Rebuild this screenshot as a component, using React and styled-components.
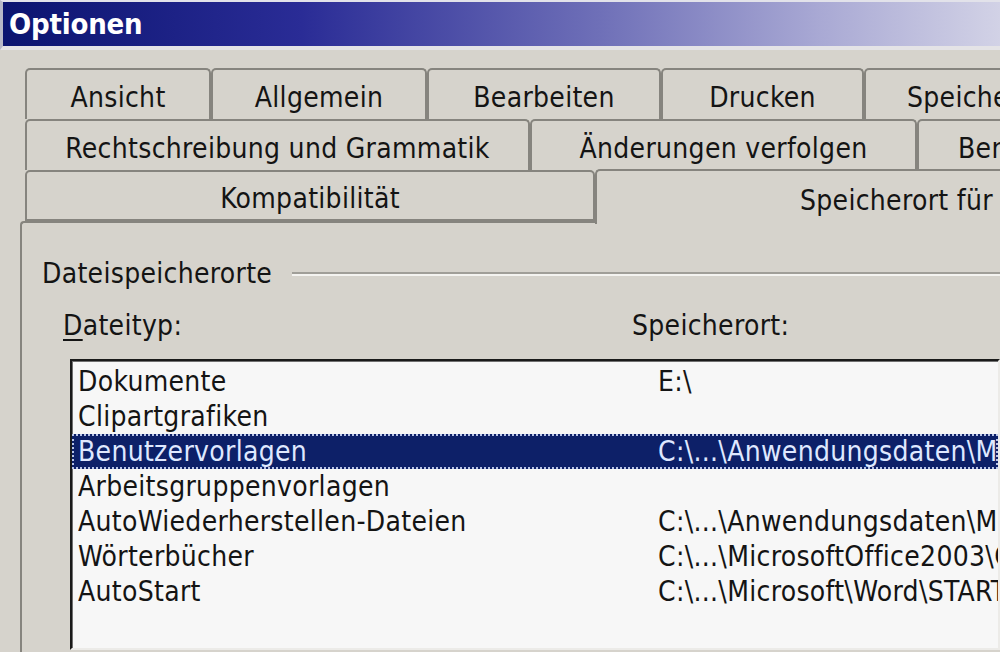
import React from 'react';
import styled, { createGlobalStyle } from 'styled-components';

const GlobalStyle = createGlobalStyle`
  html, body {
    margin: 0;
    padding: 0;
    background: #d6d3cc;
  }
  body {
    font-family: "DejaVu Sans Condensed", "Liberation Sans", sans-serif;
    color: #141414;
  }
`;

const Window = styled.div`
  width: 1000px;
  height: 652px;
  overflow: hidden;
  background: #d6d3cc;
  display: flex;
  flex-direction: column;
`;

const TitleBar = styled.div`
  flex: 0 0 auto;
  height: 44px;
  display: flex;
  align-items: center;
  padding-left: 6px;
  border-top: 2px solid #e2e2ea;
  border-left: 3px solid #b8b8c8;
  background: linear-gradient(to right, #0b1470 0%, #2a2c96 30%, #6f70b8 60%, #a9a9d4 82%, #d2d2e6 100%);
  border-bottom: 4px solid #e4e3e6;
`;

const Title = styled.span`
  color: #fff;
  font-weight: bold;
  font-size: 29px;
  letter-spacing: -0.2px;
`;

const Body = styled.div`
  flex: 1;
  padding: 18px 0 0 20px;
  display: flex;
  flex-direction: column;
  min-height: 0;
`;

const TabStrip = styled.div`
  display: flex;
  flex-direction: column;
  padding-left: 5px;
`;

const TabRow = styled.div`
  display: flex;
  height: ${(p) => p.$h}px;
  align-items: flex-end;
`;

const Tab = styled.div`
  flex: 0 0 auto;
  box-sizing: border-box;
  width: ${(p) => p.$w}px;
  height: ${(p) => (p.$active ? p.$h + 4 : p.$h)}px;
  display: flex;
  align-items: center;
  justify-content: ${(p) => (p.$left != null ? 'flex-start' : 'center')};
  padding: 6px 0 0 ${(p) => p.$left || 0}px;
  border: 2px solid #86847e;
  border-bottom: ${(p) => (p.$bottom ? '2px solid #86847e' : 'none')};
  border-radius: 5px 5px 0 0;
  background: #d6d3cc;
  font-size: 28px;
  letter-spacing: 0.3px;
  white-space: nowrap;
  ${(p) =>
    p.$active &&
    `
    border-right: none;
    position: relative;
    z-index: 1;
    margin-bottom: -3px;
  `}
`;

const Panel = styled.div`
  flex: 1;
  border-top: 2px solid #86847e;
  border-left: 2px solid #86847e;
  border-top-left-radius: 4px;
  padding: 34px 0 0 20px;
  display: flex;
  flex-direction: column;
`;

const GroupHeader = styled.div`
  display: flex;
  align-items: center;
  gap: 20px;
  font-size: 28px;
  letter-spacing: 0.3px;
  height: 32px;
`;

const GroupLine = styled.div`
  flex: 1;
  height: 0;
  border-top: 2px solid #a09e98;
  border-bottom: 2px solid #f4f3f0;
  margin-top: 2px;
`;

const Labels = styled.div`
  display: grid;
  grid-template-columns: 569px 1fr;
  margin: 20px 0 0 21px;
  font-size: 28px;
  letter-spacing: 0.3px;
  height: 32px;
  align-items: center;
`;

const Mnemonic = styled.span`
  text-decoration: underline;
  text-underline-offset: 4px;
  text-decoration-thickness: 2px;
`;

const ListBox = styled.div`
  margin: 18px 0 2px 28px;
  flex: 1;
  background: #f7f7f7;
  border-top: 2px solid #1a1a1a;
  border-left: 2px solid #1a1a1a;
  border-right: 2px solid #ecebe8;
  border-bottom: 2px solid #ecebe8;
  box-shadow: inset 1px 1px 0 #707070;
  padding-top: 3px;
  display: flex;
  flex-direction: column;
  overflow: hidden;
`;

const ListRow = styled.div`
  display: grid;
  grid-template-columns: 580px 1fr;
  height: 35px;
  align-items: center;
  padding-left: 6px;
  font-size: 28px;
  letter-spacing: 0.3px;
  white-space: nowrap;
  overflow: hidden;
  box-sizing: border-box;
  background: ${(p) => (p.$selected ? '#0d2068' : 'transparent')};
  color: ${(p) => (p.$selected ? '#dfe8ff' : '#141414')};
  outline: ${(p) => (p.$selected ? '2px dotted #b8c4e8' : 'none')};
  outline-offset: -2px;
`;

const Cell = styled.span`
  overflow: hidden;
`;

const rows = [
  ['Dokumente', 'E:\\'],
  ['Clipartgrafiken', ''],
  ['Benutzervorlagen', 'C:\\...\\Anwendungsdaten\\Microsoft\\Vorlagen', true],
  ['Arbeitsgruppenvorlagen', ''],
  ['AutoWiederherstellen-Dateien', 'C:\\...\\Anwendungsdaten\\Microsoft\\Word'],
  ['Wörterbücher', 'C:\\...\\MicrosoftOffice2003\\Office11'],
  ['AutoStart', 'C:\\...\\Microsoft\\Word\\STARTUP'],
];

export default function App() {
  return (
    <>
      <GlobalStyle />
      <Window>
        <TitleBar>
          <Title>Optionen</Title>
        </TitleBar>
        <Body>
          <TabStrip>
            <TabRow $h={51}>
              <Tab $h={51} $w={186}>Ansicht</Tab>
              <Tab $h={51} $w={216}>Allgemein</Tab>
              <Tab $h={51} $w={234}>Bearbeiten</Tab>
              <Tab $h={51} $w={203}>Drucken</Tab>
              <Tab $h={51} $w={230} $left={41}>Speichern</Tab>
            </TabRow>
            <TabRow $h={51}>
              <Tab $h={51} $w={505}>Rechtschreibung und Grammatik</Tab>
              <Tab $h={51} $w={387}>Änderungen verfolgen</Tab>
              <Tab $h={51} $w={300} $left={39}>Benutzerinformationen</Tab>
            </TabRow>
            <TabRow $h={51}>
              <Tab $h={51} $w={570} $bottom>Kompatibilität</Tab>
              <Tab $h={51} $w={500} $left={203} $active>Speicherort für Dateien</Tab>
            </TabRow>
          </TabStrip>
          <Panel>
            <GroupHeader>
              <span>Dateispeicherorte</span>
              <GroupLine />
            </GroupHeader>
            <Labels>
              <span>
                <Mnemonic>D</Mnemonic>ateityp:
              </span>
              <span>Speicherort:</span>
            </Labels>
            <ListBox>
              {rows.map(([type, path, sel]) => (
                <ListRow key={type} $selected={sel}>
                  <Cell>{type}</Cell>
                  <Cell>{path}</Cell>
                </ListRow>
              ))}
            </ListBox>
          </Panel>
        </Body>
      </Window>
    </>
  );
}
